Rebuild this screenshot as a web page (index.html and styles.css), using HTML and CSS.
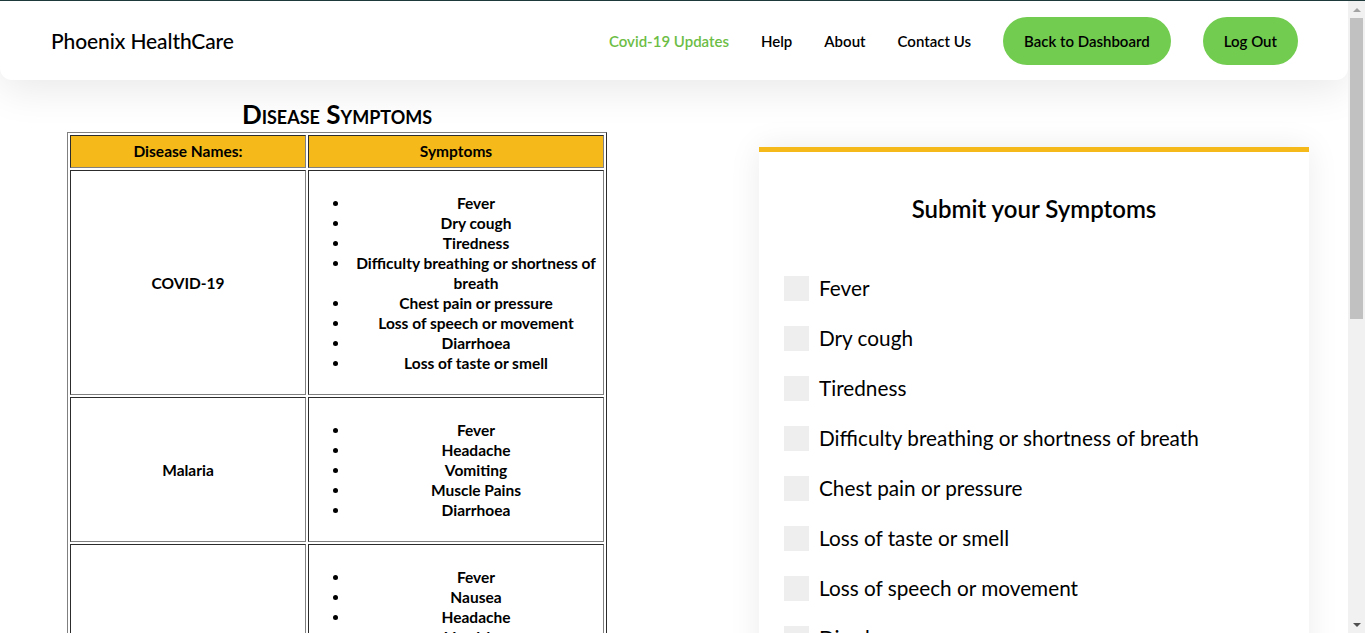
FILE: index.html
```html
<!DOCTYPE html>
<html lang="en">
<head>
<meta charset="utf-8">
<title>Phoenix HealthCare - Disease Symptoms</title>
<link rel="stylesheet" href="styles.css">
</head>
<body>
<div class="page">
  <div class="topline"></div>
  <header class="site-header">
    <div class="brand">Phoenix HealthCare</div>
    <nav class="nav">
      <a class="nav-link active" href="#">Covid-19 Updates</a>
      <a class="nav-link" href="#">Help</a>
      <a class="nav-link" href="#">About</a>
      <a class="nav-link" href="#">Contact Us</a>
      <a class="pill" href="#">Back to Dashboard</a>
      <a class="pill" href="#">Log Out</a>
    </nav>
  </header>
  <main class="main">
    <section class="left-col">
      <h2 class="section-title">Disease Symptoms</h2>
      <table class="disease-table" border="1">
        <thead>
          <tr><th class="col-name">Disease Names:</th><th class="col-sym">Symptoms</th></tr>
        </thead>
        <tbody>
          <tr>
            <td>COVID-19</td>
            <td>
              <ul>
                <li>Fever</li>
                <li>Dry cough</li>
                <li>Tiredness</li>
                <li>Difficulty breathing or shortness of breath</li>
                <li>Chest pain or pressure</li>
                <li>Loss of speech or movement</li>
                <li>Diarrhoea</li>
                <li>Loss of taste or smell</li>
              </ul>
            </td>
          </tr>
          <tr>
            <td>Malaria</td>
            <td>
              <ul>
                <li>Fever</li>
                <li>Headache</li>
                <li>Vomiting</li>
                <li>Muscle Pains</li>
                <li>Diarrhoea</li>
              </ul>
            </td>
          </tr>
          <tr>
            <td>Typhoid</td>
            <td>
              <ul>
                <li>Fever</li>
                <li>Nausea</li>
                <li>Headache</li>
                <li>Vomiting</li>
                <li>Diarrhoea</li>
                <li>Stomach pain</li>
                <li>Loss of appetite</li>
                <li>Weakness</li>
                <li>Rash</li>
              </ul>
            </td>
          </tr>
        </tbody>
      </table>
    </section>
    <section class="right-col">
      <form class="card">
        <h3 class="card-title">Submit your Symptoms</h3>
        <div class="checks">
          <label class="check"><span class="box"></span>Fever</label>
          <label class="check"><span class="box"></span>Dry cough</label>
          <label class="check"><span class="box"></span>Tiredness</label>
          <label class="check"><span class="box"></span>Difficulty breathing or shortness of breath</label>
          <label class="check"><span class="box"></span>Chest pain or pressure</label>
          <label class="check"><span class="box"></span>Loss of taste or smell</label>
          <label class="check"><span class="box"></span>Loss of speech or movement</label>
          <label class="check"><span class="box"></span>Diarrhoea</label>
        </div>
      </form>
    </section>
  </main>
</div>
<div class="scrollbar" aria-hidden="true">
  <div class="sb-btn"><span class="tri-up"></span></div>
  <div class="sb-thumb"></div>
  <div class="sb-space"></div>
  <div class="sb-btn"><span class="tri-down"></span></div>
</div>
</body>
</html>
```
FILE: styles.css
```css
* { box-sizing: border-box; }
html, body { margin: 0; padding: 0; }
body {
  font-family: Lato, "Open Sans", "Liberation Sans", sans-serif;
  color: #000;
  background: #fff;
  overflow-x: hidden;
}
.page { width: 1348px; }
.topline { height: 1px; background: #1f3b3b; width: 1365px; }
.site-header {
  display: flex;
  align-items: center;
  justify-content: space-between;
  height: 79px;
  padding: 0 49px 0 51px;
  background: #fff;
  border-radius: 0 0 12px 12px;
  box-shadow: 0 10px 40px rgba(0,0,0,0.09);
  position: relative;
  z-index: 2;
}
.brand { font-size: 21px; font-weight: 500; letter-spacing: -0.1px; }
.nav { display: flex; align-items: center; gap: 32px; margin-right: 1px; }
.nav-link {
  color: #000;
  text-decoration: none;
  font-size: 15px;
  font-weight: 600;
}
.nav-link.active { color: #6cbd45; }
.pill {
  display: inline-block;
  background: #72cc50;
  color: #000;
  text-decoration: none;
  font-size: 15px;
  font-weight: 600;
  padding: 14px 21px;
  line-height: 20px;
  border-radius: 24px;
}
.main { display: flex; align-items: flex-start; min-height: 900px; }
.left-col { width: 674px; display: flex; flex-direction: column; align-items: center; }
.section-title {
  font-variant: small-caps;
  font-size: 26px;
  font-weight: 700;
  margin: 17px 0 1px;
  line-height: 34px;
}
.disease-table {
  width: 540px;
  border-collapse: separate;
  border-spacing: 2px;
  border: 1px outset #808080;
  font-size: 15.5px;
  font-weight: 700;
  text-align: center;
}
.disease-table th, .disease-table td {
  border: 1px inset #808080;
  padding: 6px 1px;
  line-height: 20px;
  vertical-align: middle;
}
.disease-table th { background: #f5b919; line-height: 19px; }
.col-name { width: 236px; }
.disease-table ul { margin: 16px 0 15px; padding-left: 40px; }
.right-col { padding: 67px 0 0 85px; }
.card {
  width: 550px;
  min-height: 700px;
  background: #fff;
  border-top: 5px solid #f5b919;
  box-shadow: 0 0 30px rgba(0,0,0,0.08);
  padding: 42px 25px 0;
}
.card-title {
  margin: 0 0 52px;
  text-align: center;
  font-size: 24px;
  font-weight: 600;
  line-height: 30px;
}
.checks { display: flex; flex-direction: column; gap: 25px; }
.check { display: flex; align-items: center; gap: 10px; font-size: 20.75px; line-height: 25px; }
.box { width: 25px; height: 25px; background: #eee; flex: none; }

.scrollbar {
  position: fixed;
  top: 0;
  right: 0;
  width: 17px;
  height: 100vh;
  background: #f1f1f1;
  border-top: 1px solid #1f3b3b;
  display: flex;
  flex-direction: column;
  z-index: 10;
}
.sb-btn { height: 17px; display: flex; align-items: center; justify-content: center; flex: none; }
.tri-up, .tri-down { width: 0; height: 0; border-left: 4px solid transparent; border-right: 4px solid transparent; }
.tri-up { border-bottom: 4px solid #a3a3a3; }
.tri-down { border-top: 4px solid #505050; }
.sb-thumb { height: 301px; margin: 0 2px; background: #c1c1c1; flex: none; }
.sb-space { flex: 1; }
```
